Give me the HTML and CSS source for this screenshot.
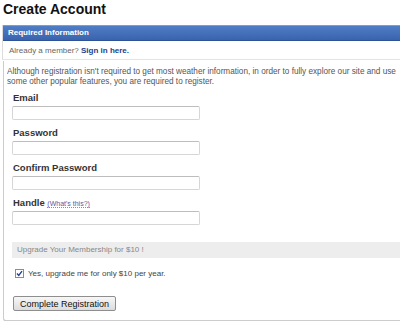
FILE: index.html
```html
<!DOCTYPE html>
<html lang="en">
<head>
  <meta charset="UTF-8">
  <title>Create Account</title>
  <link rel="stylesheet" href="styles.css">
</head>
<body>
  <h1>Create Account</h1>

  <div class="memberbox">
    <div class="boxhead">Required Information</div>
    <div class="memberrow">Already a member? <a href="#" class="signin">Sign in here.</a></div>
  </div>

  <form class="regform" onsubmit="return false;">
    <p class="intro">Although registration isn't required to get most weather information, in order to fully explore our site and use some other popular features, you are required to register.</p>

    <div class="field">
      <label class="formlabel" for="Email">Email</label>
      <input type="text" id="Email" name="Email">
    </div>

    <div class="field">
      <label class="formlabel" for="Password">Password</label>
      <input type="password" id="Password" name="Password">
    </div>

    <div class="field">
      <label class="formlabel" for="Confirm">Confirm Password</label>
      <input type="password" id="Confirm" name="Confirm">
    </div>

    <div class="field">
      <label class="formlabel" for="Handle">Handle <a href="#" class="whatsthis">(What's this?)</a></label>
      <input type="text" id="Handle" name="Handle">
    </div>

    <div class="upgradebar">Upgrade Your Membership for $10 !</div>

    <label class="upgraderow">
      <span class="checkbox">
        <svg width="9" height="9" viewBox="0 0 9 9">
          <rect x="0.5" y="0.5" width="8" height="8" fill="#fff" stroke="#8c8c8c"/>
          <path d="M2 4.5 L3.8 6.5 L7 2.2" fill="none" stroke="#2a3f8f" stroke-width="1.4"/>
        </svg>
      </span>
      Yes, upgrade me for only $10 per year.
    </label>

    <input type="button" class="submitbtn" value="Complete Registration">
  </form>
</body>
</html>
```

FILE: styles.css
```css
body {
  margin: 0;
  font-family: "Liberation Sans", Arial, sans-serif;
  background: #fff;
  overflow: hidden;
}

h1 {
  margin: 0 0 7px 0;
  padding-left: 3px;
  font-size: 14px;
  line-height: 18px;
  color: #111;
}

.memberbox {
  margin-left: 2px;
  border-left: 1px solid #dcdcdc;
  border-bottom: 1px solid #e4e4e4;
}

.boxhead {
  height: 14px;
  line-height: 14px;
  padding-left: 5px;
  font-size: 8px;
  font-weight: bold;
  color: #fff;
  background: linear-gradient(#4f7dc6, #3a63ad);
  border-top: 1px solid #7d9bd2;
  border-bottom: 1px solid #2d5298;
}

.memberrow {
  height: 18px;
  line-height: 19px;
  padding-left: 6px;
  font-size: 8px;
  color: #666;
}

.signin {
  color: #23408e;
  font-weight: bold;
  text-decoration: none;
}

.regform {
  margin: 1px 0 0 3px;
  padding: 6px 0 9px 0;
  border-left: 1px solid #cccccc;
  border-bottom: 2px solid #cccccc;
  border-bottom-left-radius: 4px;
}

.intro {
  margin: 0 0 5px 0;
  padding: 0 2px 0 3px;
  font-size: 8.2px;
  line-height: 10px;
  color: #555;
}

.field {
  margin: 0 0 7px 8px;
}

.formlabel {
  display: block;
  height: 12px;
  line-height: 12px;
  padding-left: 1px;
  margin-bottom: 2px;
  font-size: 9.5px;
  font-weight: bold;
  color: #333;
}

.whatsthis {
  font-size: 7px;
  font-weight: normal;
  color: #5858a8;
  text-decoration: none;
  border-bottom: 1px dotted #8a8ac0;
}

.field input {
  display: block;
  box-sizing: border-box;
  width: 188px;
  height: 14px;
  margin: 0;
  padding: 0 3px;
  border: 1px solid #d6d6d6;
  border-top-color: #bdbdbd;
  border-radius: 2px;
  background: #fff;
}

.upgradebar {
  margin: 17px 0 0 8px;
  height: 16px;
  line-height: 16px;
  padding-left: 5px;
  font-size: 8px;
  color: #888;
  background: #ededed;
}

.upgraderow {
  display: flex;
  align-items: center;
  gap: 4px;
  margin: 10px 0 0 11px;
  height: 10px;
  font-size: 8px;
  color: #444;
}

.checkbox {
  display: flex;
  width: 9px;
  height: 9px;
}

.submitbtn {
  display: block;
  margin: 18px 0 0 9px;
  height: 15px;
  padding: 0 6px;
  font-family: "Liberation Sans", Arial, sans-serif;
  font-size: 9px;
  color: #111;
  background: linear-gradient(#f7f7f7, #dcdcdc);
  border: 1px solid #8e8e8e;
  border-radius: 2px;
}
```
